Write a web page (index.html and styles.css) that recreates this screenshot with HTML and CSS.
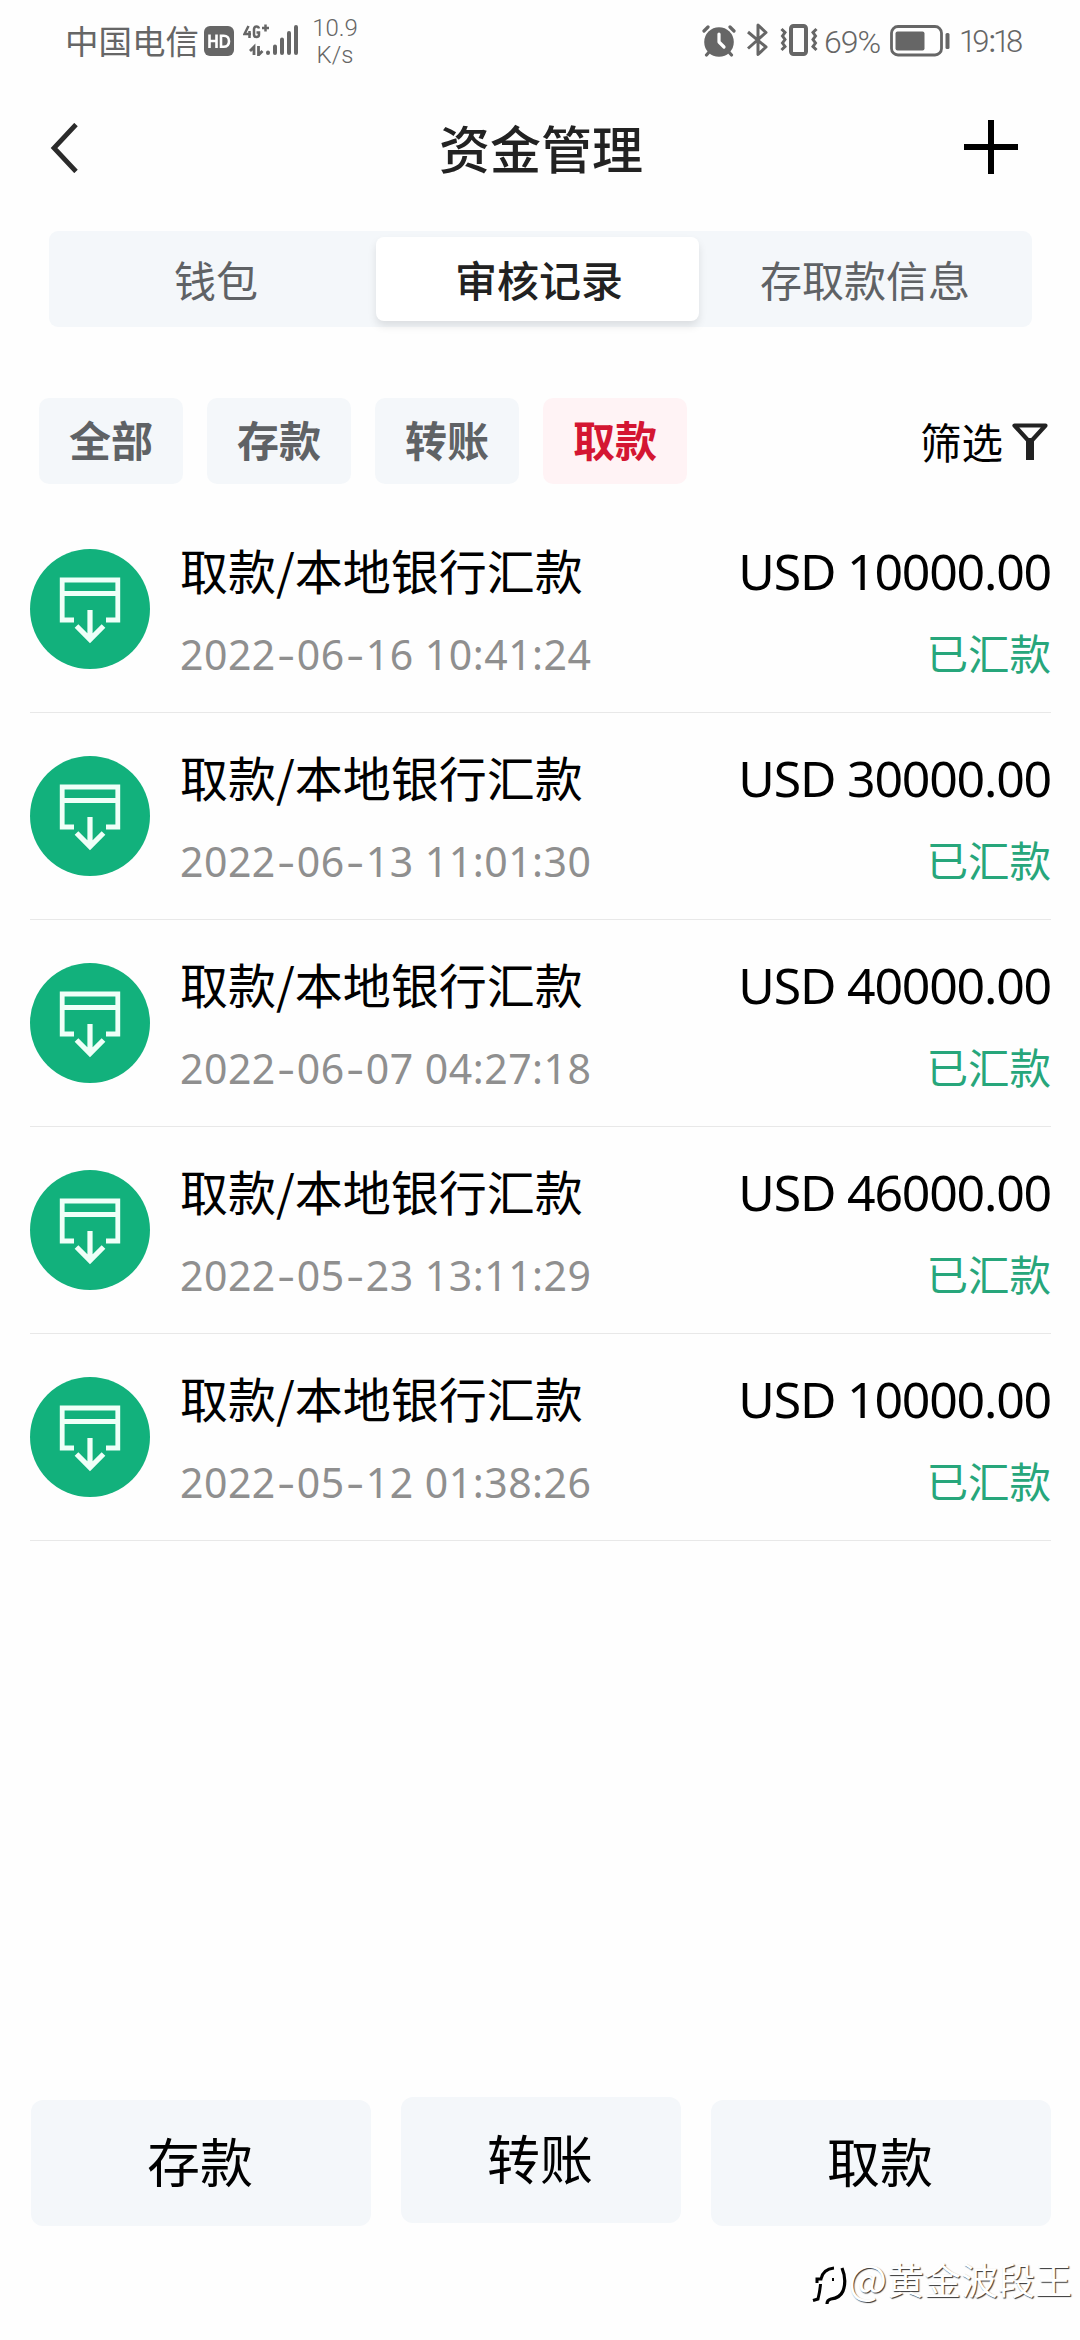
FILE: index.html
```html
<!DOCTYPE html>
<html lang="zh-CN">
<head>
<meta charset="utf-8">
<title>资金管理</title>
<link rel="stylesheet" href="styles.css">
</head>
<body>
<svg class="defs" width="0" height="0" aria-hidden="true">
  <symbol id="withdraw" viewBox="0 0 120 120">
    <circle cx="60" cy="60" r="60" fill="#12b17c"/>
    <path d="M44 71H32.200V31H87.800V71H76M32 44.500H88" fill="none" stroke="#effff8" stroke-width="4.800"/>
    <path d="M60 61V90M46.500 77L60 90.500L73.500 77" fill="none" stroke="#effff8" stroke-width="5.200"/>
  </symbol>
</svg>
<div class="screen">
  <div class="status">
    <span class="carrier">中国电信</span>
    <svg class="hd" width="30" height="30" viewBox="0 0 30 30"><rect width="30" height="30" rx="6" fill="#666"/><path d="M5.500 8.500V22M12.500 8.500V22M5.500 15H12.500M17 9.800V20.700H19.500Q25 20.700 25 15.200T19.500 9.800Z" fill="none" stroke="#fff" stroke-width="2.600"/></svg>
    <svg class="signal" width="56" height="32" viewBox="0 0 56 32"><g fill="none" stroke="#666" stroke-width="2.500"><path d="M5.500 2L1.500 10H8M6.500 7V14M16 4.500Q15.500 2.500 13.500 2.500T11 5V10.500Q11 13 13.500 13T16 10.500V8.500H13.500M19 4H26M22.500 .5V7.500"/><path d="M11 31V23L7 27M15.500 22V31L19.500 27" stroke-width="2.800"/></g><g stroke="#666" stroke-width="4" stroke-linecap="round"><path d="M25 28.500V29M32 22.500V29M39 15.500V29M46 9V29M53 3V29"/></g></svg>
    <div class="speed"><span>10.9</span><span>K/s</span></div>
    <svg class="alarm" width="34" height="34" viewBox="0 0 34 34"><g stroke="#666" stroke-width="3.200" stroke-linecap="round"><path d="M2 7L6 3M32 7L28 3M8 27L4.500 31M26 27L29.500 31"/></g><circle cx="17" cy="18" r="14.800" fill="#666"/><path d="M17 10V18L22 23" fill="none" stroke="#fff" stroke-width="3.200" stroke-linecap="round" stroke-linejoin="round"/></svg>
    <svg class="bluetooth" width="23" height="34" viewBox="0 0 23 34"><path d="M2 9L20 24L12 31.500V2L20 9.500L2 25.500" fill="none" stroke="#666" stroke-width="3" stroke-linejoin="round"/></svg>
    <svg class="vibrate" width="40" height="34" viewBox="0 0 40 34"><rect x="12" y="3" width="15" height="28" rx="2.500" fill="none" stroke="#666" stroke-width="4"/><path d="M2.500 6L6 9.500L3.500 13L6 16.500L3.500 20L6 23.500L2.500 27M37.500 6L34 9.500L36.500 13L34 16.500L36.500 20L34 23.500L37.500 27" fill="none" stroke="#666" stroke-width="3"/></svg>
    <span class="percent">69%</span>
    <svg class="battery" width="60" height="32" viewBox="0 0 60 32"><rect x="1.500" y="1.500" width="50" height="28.500" rx="6.500" fill="none" stroke="#666" stroke-width="2.800"/><rect x="5.500" y="6.500" width="29" height="19" rx="2" fill="#666"/><rect x="55.500" y="8" width="4" height="16" rx="1.500" fill="#666"/></svg>
    <span class="clock">19<b>:</b>18</span>
  </div>

  <header class="header">
    <svg class="back" width="30" height="50" viewBox="0 0 30 50"><path d="M27 1.500L5 25L27 48.500" fill="none" stroke="#2b2b2b" stroke-width="4.800"/></svg>
    <h1>资金管理</h1>
    <svg class="add" width="54" height="54" viewBox="0 0 54 54"><path d="M27 0V54M0 27H54" stroke="#000" stroke-width="6"/></svg>
  </header>

  <nav class="tabs"><span class="tab">钱包</span><span class="tab active">审核记录</span><span class="tab">存取款信息</span></nav>

  <div class="filters">
    <span class="chip">全部</span><span class="chip">存款</span><span class="chip">转账</span><span class="chip selected">取款</span>
    <span class="filter">筛选<svg width="36" height="37" viewBox="0 0 36 37"><path d="M2.500 2.500H33.500L18 19.500Z" fill="none" stroke="#222" stroke-width="4.200" stroke-linejoin="round"/><path d="M18 19V33" stroke="#222" stroke-width="8" stroke-linecap="square"/></svg></span>
  </div>

  <main class="list">
    <div class="row"><svg class="icon"><use href="#withdraw"/></svg><div class="info"><span class="title">取款/本地银行汇款</span><span class="date">2022<i>-</i>06<i>-</i>16 10:41:24</span></div><div class="sum"><span class="amount">USD 10000.00</span><span class="state">已汇款</span></div></div>
    <div class="row"><svg class="icon"><use href="#withdraw"/></svg><div class="info"><span class="title">取款/本地银行汇款</span><span class="date">2022<i>-</i>06<i>-</i>13 11:01:30</span></div><div class="sum"><span class="amount">USD 30000.00</span><span class="state">已汇款</span></div></div>
    <div class="row"><svg class="icon"><use href="#withdraw"/></svg><div class="info"><span class="title">取款/本地银行汇款</span><span class="date">2022<i>-</i>06<i>-</i>07 04:27:18</span></div><div class="sum"><span class="amount">USD 40000.00</span><span class="state">已汇款</span></div></div>
    <div class="row"><svg class="icon"><use href="#withdraw"/></svg><div class="info"><span class="title">取款/本地银行汇款</span><span class="date">2022<i>-</i>05<i>-</i>23 13:11:29</span></div><div class="sum"><span class="amount">USD 46000.00</span><span class="state">已汇款</span></div></div>
    <div class="row"><svg class="icon"><use href="#withdraw"/></svg><div class="info"><span class="title">取款/本地银行汇款</span><span class="date">2022<i>-</i>05<i>-</i>12 01:38:26</span></div><div class="sum"><span class="amount">USD 10000.00</span><span class="state">已汇款</span></div></div>
  </main>

  <footer class="actions"><span class="action">存款</span><span class="action middle">转账</span><span class="action">取款</span></footer>

  <div class="watermark">
    <svg width="36" height="42" viewBox="0 0 36 42"><path d="M1 35.500L6 34Q8 26 8.500 19M5 18V14H9Q11 4 22 3M20 14.500H22" fill="none" stroke="#000" stroke-width="3"/><path d="M30 3Q35 15 31 26Q28 33 19 34Q15 35 15 39" fill="none" stroke="#000" stroke-width="3.200"/></svg>
    <span><b>@</b>黄金波段王</span>
  </div>
</div>
</body>
</html>
```

FILE: styles.css
```css
* { box-sizing: border-box; }
body { margin: 0; background: #fefefe; font-family: "Noto Sans CJK SC", sans-serif; color: #000; }
.defs { display: block; }
.screen { width: 1080px; height: 2340px; display: flex; flex-direction: column; overflow: hidden; }
.screen span { white-space: nowrap; }

.status { height: 84px; flex: none; display: flex; align-items: flex-start; color: #666; padding-left: 65px; }
.carrier { font-size: 33.500px; line-height: 50px; margin-top: 15px; width: 139px; }
.hd { margin-top: 26px; }
.signal { margin: 24px 0 0 9px; }
.speed { display: flex; flex-direction: column; align-items: center; width: 46px; margin: 15px 0 0 13px; font: 300 24px/27px Roboto, sans-serif; }
.alarm { margin: 24px 0 0 344px; }
.bluetooth { margin: 23px 0 0 10px; }
.vibrate { margin: 23px 0 0 10px; }
.percent { font: 300 32px/40px Roboto, sans-serif; margin: 22px 0 0 5px; letter-spacing: -1px; width: 60px; }
.battery { margin: 25px 0 0 6px; }
.clock { font: 300 31px/40px Roboto, sans-serif; margin: 22px 0 0 9px; letter-spacing: -4px; }
.clock b { font-weight: 400; letter-spacing: 0; margin: 0 -3px 0 3px; }

.header { height: 147px; flex: none; display: flex; align-items: flex-start; justify-content: space-between; padding: 36px 62px 0 49px; }
.back { margin-top: 3px; }
.header h1 { margin: -11px 0 0 39px; font-size: 51px; line-height: 76px; font-weight: 500; color: #222; }

.tabs { height: 96px; flex: none; margin: 0 48px 0 49px; padding: 6px 4px 6px 4px; display: grid; grid-template-columns: 323px 323px 1fr; background: #f4f7fa; border-radius: 9px; }
.tab { display: flex; align-items: center; justify-content: center; font-size: 42px; line-height: 60px; color: #5f6265; padding-left: 3px; }
.active { background: #fff; color: #222; font-weight: 500; border-radius: 8px; box-shadow: 0 5px 8px rgba(0, 0, 0, .1); }

.filters { margin-top: 71px; height: 86px; flex: none; display: flex; gap: 24px; padding: 0 32px 0 39px; }
.chip { width: 144px; display: flex; align-items: center; justify-content: center; background: #f4f7fa; border-radius: 10px; color: #5f6265; font-size: 42px; font-weight: 700; padding-bottom: 5px; }
.selected { background: #fff3f5; color: #d41632; }
.filter { margin-left: auto; display: flex; align-items: center; gap: 9px; font-size: 41.500px; }

.list { margin-top: 22px; }
.row { height: 207px; display: flex; padding: 43px 0 0; margin: 0 29px 0 30px; border-bottom: 1.500px solid #e8e8e8; }
.icon { width: 120px; height: 120px; flex: none; }
.info, .sum { display: flex; flex-direction: column; }
.info { margin-left: 30px; }
.sum { margin-left: auto; align-items: flex-end; }
.title { font-size: 48px; line-height: 70px; margin-top: -15px; }
.date { font: 41px/60px "Noto Sans", sans-serif; color: #8f8f8f; margin-top: 20px; letter-spacing: .5px; }
.date i { display: inline-block; width: 21px; font-style: normal; text-align: center; transform: scaleX(1.35); }
.amount { font: 50px/70px "Noto Sans", sans-serif; margin-top: -13px; letter-spacing: -1.200px; }
.state { font-size: 41.500px; line-height: 60px; color: #27a67b; margin-top: 16px; }

.actions { margin-top: auto; display: grid; grid-template-columns: 340px 280px 340px; justify-content: space-between; padding: 0 29px 0 31px; }
.action { height: 126px; display: flex; align-items: center; justify-content: center; background: #f4f7fa; border-radius: 12px; font-size: 53px; margin-top: 3px; padding: 0 2px 6px 0; }
.middle { margin-top: 0; }

.watermark { height: 114px; flex: none; display: flex; align-items: flex-start; justify-content: flex-end; padding: 26px 8px 0 0; }
.watermark svg { margin: 13px 0 0 0; }
.watermark span { font-size: 37px; line-height: 54px; color: #fff; text-shadow: 1px 1px 1px #333; }
.watermark b { font: 400 41px/50px "Noto Sans CJK SC", sans-serif; }
```
